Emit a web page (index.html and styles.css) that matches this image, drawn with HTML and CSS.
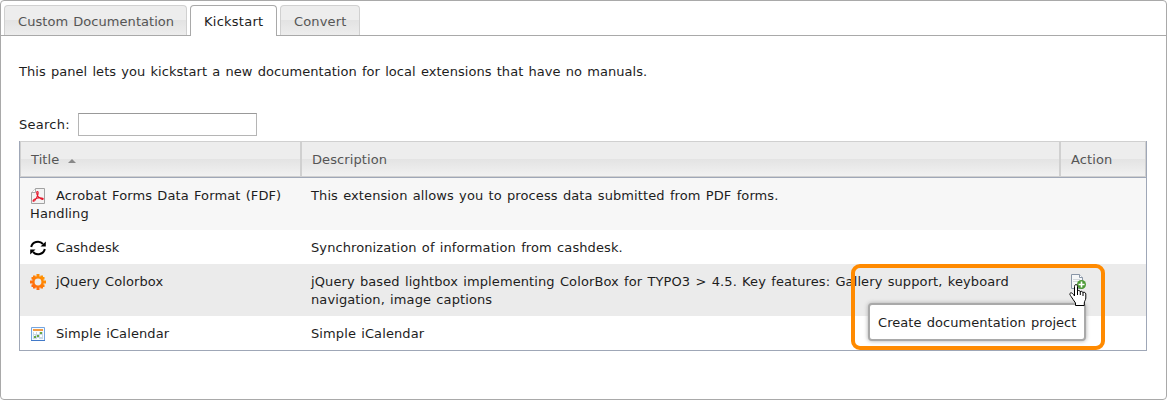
FILE: index.html
```html
<!DOCTYPE html>
<html lang="en">
<head>
<meta charset="utf-8">
<title>Documentation</title>
<link rel="stylesheet" href="styles.css">
</head>
<body>
<main class="panel">
  <nav class="tabs">
    <a class="tab">Custom Documentation</a>
    <a class="tab active">Kickstart</a>
    <a class="tab">Convert</a>
  </nav>
  <section class="content">
    <p class="intro">This panel lets you kickstart a new documentation for local extensions that have no manuals.</p>
    <label class="search"><span>Search:</span><input type="text"></label>
    <div class="table">
      <div class="row head">
        <div class="cell">Title<i class="sort"></i></div>
        <div class="cell">Description</div>
        <div class="cell">Action</div>
      </div>
      <div class="row odd">
        <div class="cell"><svg class="icon" viewBox="0 0 16 16"><path d="M5.500.5h9v15h-13V4.500z" fill="#f3f3f3" stroke="#a2a2a2"/><path d="M1.500 4.500h4v-4" fill="#fff" stroke="#aaa"/><path d="M7.200 3.500c1.500-.2.900 2.600.3 4.100C6.500 10.200 5 13 3.700 13.300c-1.300.2-.6-1.400 1.300-2.300 2.600-1.100 6-1.600 7.700-.8 1.400 1-.2 1.600-1.500.8C9 9.800 6.800 7.200 6.700 4.800c0-.7.100-1.200.5-1.300z" fill="none" stroke="#e5192c" stroke-width="1.100"/></svg>Acrobat Forms Data Format (FDF) <br>Handling</div>
        <div class="cell">This extension allows you to process data submitted from PDF forms.</div>
        <div class="cell"></div>
      </div>
      <div class="row">
        <div class="cell"><svg class="icon" viewBox="0 0 16 16"><path d="M1.200 7A6.800 6.300 0 0 1 13 4M14.800 9A6.800 6.300 0 0 1 3 12" fill="none" stroke="#000" stroke-width="2"/><path d="M15.800 1.500V6.500H10.500zM.2 14.500V9.500H5.500z"/></svg>Cashdesk</div>
        <div class="cell">Synchronization of information from cashdesk.</div>
        <div class="cell"></div>
      </div>
      <div class="row hover">
        <div class="cell"><svg class="icon" viewBox="0 0 16 16"><defs><linearGradient id="gear" x1="0" y1="1" x2="1" y2="0"><stop stop-color="#ff5a10"/><stop offset="1" stop-color="#ffa000"/></linearGradient></defs><path fill="url(#gear)" fill-rule="evenodd" d="M3 1.500h2.500v1h1V0h3v2.500h1v-1H13V3h1.500v2.500h-1v1H16v3h-2.500v1h1V13H13v1.500h-2.500v-1h-1V16h-3v-2.500h-1v1H3V13H1.500v-2.500h1v-1H0v-3h2.500v-1h-1V3H3zM8 4.600a3.400 3.400 0 1 0 0 6.800 3.400 3.400 0 0 0 0-6.800z"/></svg>jQuery Colorbox</div>
        <div class="cell">jQuery based lightbox implementing ColorBox for TYPO3 &gt; 4.5. Key features: Gallery support, keyboard <br>navigation, image captions</div>
        <div class="cell"><svg class="icon" viewBox="0 0 16 16"><path d="M1.500.5h8l3 3v11h-11z" fill="#f5f7f8" stroke="#8996a7"/><path d="M9.500.5v3h3" fill="#fff" stroke="#8996a7"/><path d="M3 5.500h7M3 7.500h5" stroke="#d2d8dc"/><circle cx="11.500" cy="10.500" r="4.500" fill="#4c9a35"/><path d="M11.500 7.500v6M8.500 10.500h6" stroke="#fff" stroke-width="1.600"/></svg></div>
      </div>
      <div class="row">
        <div class="cell"><svg class="icon" viewBox="0 0 16 16"><path d="M1.500 1.500h13v13h-13z" fill="#f6fbff" stroke="#75a5df"/><path d="M3 3h10v2H3z" fill="#f29b45"/><path d="M3 6h10v7H3z" fill="#c9d9e5"/><path d="M4 6h2v2H4zM7 6h2v2H7zM4 9h1v1H4zM10 9h2v2h-2zM7 12h2v1H7z" fill="#fff"/><path d="M10 6h2v2h-2zM7 9h2v2H7zM4 10h2v2H4z" fill="#68a744"/><path d="M1 14h14v1H1z" fill="#4279c8"/></svg>Simple iCalendar</div>
        <div class="cell">Simple iCalendar</div>
        <div class="cell"></div>
      </div>
    </div>
  </section>
  <div class="marker"></div>
  <div class="tooltip">Create documentation project</div>
  <svg class="pointer" viewBox="0 0 18 22"><path d="M5.500 12V2.500c0-2.600 3-2.600 3 0V7c1-1 2.400-.5 2.700.6 1-.7 2.400-.2 2.600.9 1.400-.7 3 .1 3 1.600V14c0 2-1.500 3-1.500 5v2.500H6.500V19C5 16.500 3.500 15 2.200 12.600 1 11 .2 9.500 1.500 9c1.600-.6 2.600 1 4 3z" fill="#fff" stroke="#000"/><path d="M8.500 6v5M11.300 7.500V11M14 8.500V12" stroke="#000"/></svg>
</main>
</body>
</html>
```
FILE: styles.css
```css
* { box-sizing: border-box; }
body { margin: 0; background: #fff; color: #1d1d1d; font: 13px/18px "DejaVu Sans", Verdana, sans-serif; letter-spacing: .05px; word-spacing: 1px; }
.panel { position: relative; width: 1167px; height: 400px; border: 1px solid #a9a9a9; border-radius: 4px; }
.tabs { display: flex; gap: 3px; height: 35px; padding: 4px 3px 0; border-bottom: 1px solid #a9a9a9; }
.tab { height: 30px; padding: 7px 0 0 13px; width: 183px; border: 1px solid #d0d0d0; border-bottom: 0; border-radius: 4px 4px 0 0; color: #555; background: linear-gradient(#ededed 50%, #e3e3e3 50%, #ededed); white-space: nowrap; }
.tab.active { width: 87px; height: 31px; border-color: #a9a9a9; background: #fff; color: #1d1d1d; letter-spacing: .25px; }
.tab:last-child { width: 80px; letter-spacing: .15px; }
.content { padding: 27px 19px 0 18px; }
.intro { margin: 0 0 32px; }
.search { display: flex; align-items: center; height: 23px; margin-bottom: 5px; }
.search span { width: 59px; letter-spacing: .25px; }
.search input { width: 179px; height: 23px; border: 1px solid #b5b5b5; border-top-color: #999; }
.table { width: 1128px; border: 1px solid #9fa7b7; border-top: 0; letter-spacing: .1px; }
.row { display: grid; grid-template-columns: 281px 759px 86px; height: 34px; }
.cell { padding: 9px 0 0 10px; white-space: nowrap; }
.row.head { height: 37px; border-bottom: 1px solid #9fa7b7; background: linear-gradient(#ededed 50%, #e3e3e3 50%, #f2f2f2); color: #555; }
.head .cell { border: 1px solid #d0d0d0; }
.row.odd, .row.hover { height: 52px; }
.odd { background: #f7f7f7; }
.hover { background: #ebebeb; }
.icon { width: 16px; height: 16px; margin-right: 10px; vertical-align: -4px; }
.sort { display: inline-block; margin-left: 9px; border: 4px solid transparent; border-top: 0; border-bottom-color: #888; vertical-align: 1px; }
.marker { position: absolute; left: 850px; top: 263px; width: 254px; height: 86px; border: 4px solid #ff8a00; border-radius: 9px; }
.tooltip { position: absolute; left: 867px; top: 302px; width: 218px; height: 38px; padding: 9px 0 0 8px; border: 2px solid #a9a9a9; border-radius: 4px; background: #fff; box-shadow: 0 0 4px #aaa; white-space: nowrap; }
.pointer { position: absolute; left: 1068px; top: 283px; width: 18px; height: 22px; }
```
